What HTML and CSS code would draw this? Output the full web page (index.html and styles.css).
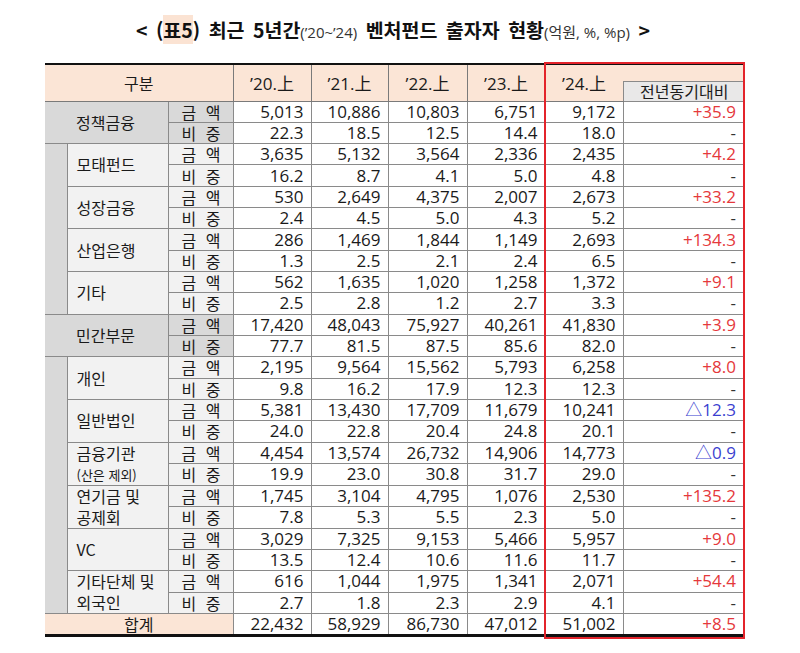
FILE: index.html
```html
<!DOCTYPE html>
<html lang="ko">
<head>
<meta charset="utf-8">
<link rel="stylesheet" href="styles.css">
</head>
<body>
<div class="page">
  <h1 class="title">&lt; (<span class="mark">표5</span>) 최근 5년간<span class="small">(’20~’24)</span> 벤처펀드 출자자 현황<span class="small">(억원, %, %p)</span> &gt;</h1>
  <div class="wrap">
    <table class="grid">
      <colgroup>
        <col class="c-strip"><col class="c-label"><col class="c-kind">
        <col class="c-y20"><col class="c-y21"><col class="c-y22"><col class="c-y23"><col class="c-y24"><col class="c-yoy">
      </colgroup>
      <thead>
        <tr class="hr1">
          <th colspan="3" rowspan="2" class="h-div">구분</th>
          <th rowspan="2">’20.上</th>
          <th rowspan="2">’21.上</th>
          <th rowspan="2">’22.上</th>
          <th rowspan="2">’23.上</th>
          <th rowspan="2" class="h-y24">’24.上</th>
          <th class="h-blank"></th>
        </tr>
        <tr class="hr2">
          <th class="h-yoy">전년동기대비</th>
        </tr>
      </thead>
      <tbody>
        <tr><td colspan="2" rowspan="2" class="cat main">정책금융</td><td class="kind main">금 액</td><td>5,013</td><td>10,886</td><td>10,803</td><td>6,751</td><td>9,172</td><td class="up">+35.9</td></tr>
        <tr><td class="kind main">비 중</td><td>22.3</td><td>18.5</td><td>12.5</td><td>14.4</td><td>18.0</td><td class="dash">-</td></tr>

        <tr><td rowspan="8" class="strip"></td><td rowspan="2" class="cat sub">모태펀드</td><td class="kind sub">금 액</td><td>3,635</td><td>5,132</td><td>3,564</td><td>2,336</td><td>2,435</td><td class="up">+4.2</td></tr>
        <tr><td class="kind sub">비 중</td><td>16.2</td><td>8.7</td><td>4.1</td><td>5.0</td><td>4.8</td><td class="dash">-</td></tr>
        <tr><td rowspan="2" class="cat sub">성장금융</td><td class="kind sub">금 액</td><td>530</td><td>2,649</td><td>4,375</td><td>2,007</td><td>2,673</td><td class="up">+33.2</td></tr>
        <tr><td class="kind sub">비 중</td><td>2.4</td><td>4.5</td><td>5.0</td><td>4.3</td><td>5.2</td><td class="dash">-</td></tr>
        <tr><td rowspan="2" class="cat sub">산업은행</td><td class="kind sub">금 액</td><td>286</td><td>1,469</td><td>1,844</td><td>1,149</td><td>2,693</td><td class="up">+134.3</td></tr>
        <tr><td class="kind sub">비 중</td><td>1.3</td><td>2.5</td><td>2.1</td><td>2.4</td><td>6.5</td><td class="dash">-</td></tr>
        <tr><td rowspan="2" class="cat sub">기타</td><td class="kind sub">금 액</td><td>562</td><td>1,635</td><td>1,020</td><td>1,258</td><td>1,372</td><td class="up">+9.1</td></tr>
        <tr><td class="kind sub">비 중</td><td>2.5</td><td>2.8</td><td>1.2</td><td>2.7</td><td>3.3</td><td class="dash">-</td></tr>

        <tr><td colspan="2" rowspan="2" class="cat main">민간부문</td><td class="kind main">금 액</td><td>17,420</td><td>48,043</td><td>75,927</td><td>40,261</td><td>41,830</td><td class="up">+3.9</td></tr>
        <tr><td class="kind main">비 중</td><td>77.7</td><td>81.5</td><td>87.5</td><td>85.6</td><td>82.0</td><td class="dash">-</td></tr>

        <tr><td rowspan="12" class="strip"></td><td rowspan="2" class="cat sub">개인</td><td class="kind sub">금 액</td><td>2,195</td><td>9,564</td><td>15,562</td><td>5,793</td><td>6,258</td><td class="up">+8.0</td></tr>
        <tr><td class="kind sub">비 중</td><td>9.8</td><td>16.2</td><td>17.9</td><td>12.3</td><td>12.3</td><td class="dash">-</td></tr>
        <tr><td rowspan="2" class="cat sub">일반법인</td><td class="kind sub">금 액</td><td>5,381</td><td>13,430</td><td>17,709</td><td>11,679</td><td>10,241</td><td class="down">△12.3</td></tr>
        <tr><td class="kind sub">비 중</td><td>24.0</td><td>22.8</td><td>20.4</td><td>24.8</td><td>20.1</td><td class="dash">-</td></tr>
        <tr><td rowspan="2" class="cat sub"><span class="ln">금융기관</span><span class="ln note">(산은 제외)</span></td><td class="kind sub">금 액</td><td>4,454</td><td>13,574</td><td>26,732</td><td>14,906</td><td>14,773</td><td class="down">△0.9</td></tr>
        <tr><td class="kind sub">비 중</td><td>19.9</td><td>23.0</td><td>30.8</td><td>31.7</td><td>29.0</td><td class="dash">-</td></tr>
        <tr><td rowspan="2" class="cat sub"><span class="ln">연기금 및</span><span class="ln">공제회</span></td><td class="kind sub">금 액</td><td>1,745</td><td>3,104</td><td>4,795</td><td>1,076</td><td>2,530</td><td class="up">+135.2</td></tr>
        <tr><td class="kind sub">비 중</td><td>7.8</td><td>5.3</td><td>5.5</td><td>2.3</td><td>5.0</td><td class="dash">-</td></tr>
        <tr><td rowspan="2" class="cat sub">VC</td><td class="kind sub">금 액</td><td>3,029</td><td>7,325</td><td>9,153</td><td>5,466</td><td>5,957</td><td class="up">+9.0</td></tr>
        <tr><td class="kind sub">비 중</td><td>13.5</td><td>12.4</td><td>10.6</td><td>11.6</td><td>11.7</td><td class="dash">-</td></tr>
        <tr><td rowspan="2" class="cat sub"><span class="ln">기타단체 및</span><span class="ln">외국인</span></td><td class="kind sub">금 액</td><td>616</td><td>1,044</td><td>1,975</td><td>1,341</td><td>2,071</td><td class="up">+54.4</td></tr>
        <tr><td class="kind sub">비 중</td><td>2.7</td><td>1.8</td><td>2.3</td><td>2.9</td><td>4.1</td><td class="dash">-</td></tr>

        <tr class="total"><td colspan="3" class="sum">합계</td><td>22,432</td><td>58,929</td><td>86,730</td><td>47,012</td><td>51,002</td><td class="up">+8.5</td></tr>
      </tbody>
    </table>
    <div class="redbox"></div>
  </div>
</div>
</body>
</html>
```

FILE: styles.css
```css
html, body {
  margin: 0;
  padding: 0;
  background: #ffffff;
}

.page {
  width: 800px;
  height: 653px;
  font-family: "Open Sans", "Noto Sans CJK KR", sans-serif;
  color: #1a1a1a;
}

.title {
  margin: 0;
  padding-top: 17px;
  height: 26px;
  line-height: 26px;
  text-align: center;
  font-family: "Noto Sans CJK KR", sans-serif;
  font-size: 19.5px;
  font-weight: 700;
  color: #111;
  word-spacing: 3px;
  padding-right: 14px;
}

.title .mark {
  background: #fbe3d3;
}

.title .small {
  font-family: "Open Sans", "Noto Sans CJK KR", sans-serif;
  font-size: 15px;
  font-weight: 400;
  color: #333;
  word-spacing: 0;
}

.wrap {
  position: relative;
  width: 700px;
  margin: 20px 0 0 45px;
}

.grid {
  width: 700px;
  table-layout: fixed;
  border-collapse: collapse;
  border-top: 2px solid #111;
  border-bottom: 3px solid #111;
}

.c-strip { width: 22px; }
.c-label { width: 101px; }
.c-kind { width: 65px; }
.c-y20 { width: 78px; }
.c-y21 { width: 77px; }
.c-y22 { width: 79px; }
.c-y23 { width: 78px; }
.c-y24 { width: 78px; }
.c-yoy { width: 122px; }

.grid th {
  background: #fbe5d6;
  font-weight: 400;
  font-size: 17px;
  color: #1a1a1a;
  border: 1px solid #7a7a7a;
  padding: 0;
  text-align: center;
  vertical-align: middle;
  border-top: none;
}

.grid th:first-child {
  border-left: none;
}

.hr1 { height: 17px; }
.hr2 { height: 20px; }

.grid th.h-div {
  font-family: "Noto Sans CJK KR", sans-serif;
  font-size: 16px;
}

.grid th.h-y24 {
  border-right: none;
  padding-bottom: 1px;
}

.grid th.h-blank {
  border-left: none;
  border-right: none;
  border-bottom: none;
}

.grid th.h-yoy {
  background: #e9e8e8;
  font-family: "Noto Sans CJK KR", sans-serif;
  font-size: 16px;
  border: 1px solid #8a8a8a;
  border-right: none;
  line-height: 18px;
}

.grid tbody tr {
  height: 21.32px;
}

.grid td {
  border: 1px solid #8a8a8a;
  padding: 0 7px 0 0;
  font-size: 17px;
  line-height: 20px;
  text-align: right;
  vertical-align: middle;
  white-space: nowrap;
  overflow: hidden;
}

.grid td:first-child {
  border-left: none;
}

.grid td:last-child {
  border-right: none;
  padding-right: 9px;
}

.grid td.cat {
  text-align: left;
  padding: 0 0 0 9px;
  font-family: "Noto Sans CJK KR", sans-serif;
  font-size: 16px;
  line-height: 21px;
}

.grid td.cat .ln {
  display: block;
  height: 21px;
  line-height: 21px;
}

.grid td.cat.main {
  padding-left: 31px;
  background: #d9d9d9;
}

.grid td.cat.sub {
  background: #f2f2f2;
}

.grid td.cat .note {
  font-size: 13px;
}

.grid td.strip {
  background: #d9d9d9;
  padding: 0;
}

.grid td.kind {
  text-align: center;
  padding: 0 0 0 1px;
  font-family: "Noto Sans CJK KR", sans-serif;
  font-size: 16px;
  word-spacing: 5px;
  line-height: 20px;
}

.grid td.kind.main {
  background: #d9d9d9;
}

.grid td.kind.sub {
  background: #f2f2f2;
}

.grid td.up {
  color: #e5383b;
}

.grid td.down {
  color: #3b3fd0;
}

.grid td.dash {
  color: #333;
}

.grid td.sum {
  background: #fbe5d6;
  text-align: center;
  padding: 0;
  font-family: "Noto Sans CJK KR", sans-serif;
  font-size: 16px;
}

.redbox {
  position: absolute;
  left: 499px;
  top: -1px;
  width: 197px;
  bottom: -2px;
  border: 2px solid #e3242b;
  pointer-events: none;
}
```
